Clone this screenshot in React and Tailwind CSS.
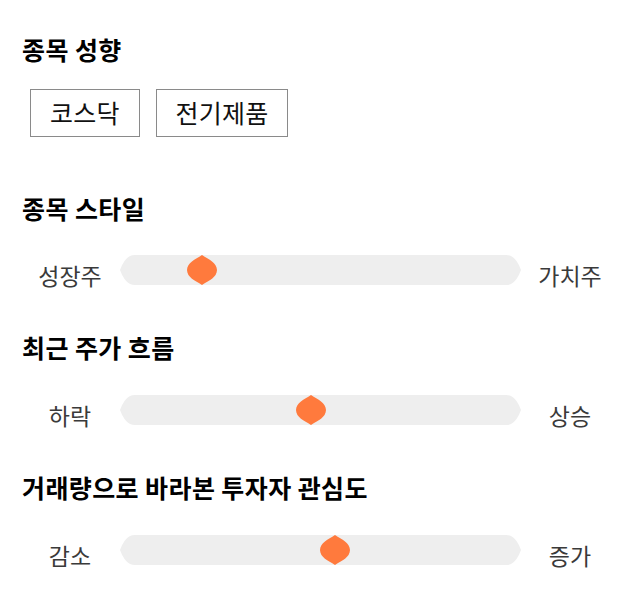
import React from "react";

const font = { fontFamily: '"Noto Sans CJK KR", "Noto Sans", sans-serif' };

function Thumb({ center }) {
  return (
    <svg
      className="absolute top-0"
      style={{ left: center - 15 }}
      width="30"
      height="30"
      viewBox="0 0 30 30"
    >
      <path
        d="M15 0 C22 4.5 29.8 7.5 30 15 C29.8 22.5 22 25.5 15 30 C8 25.5 0.2 22.5 0 15 C0.2 7.5 8 4.5 15 0 Z"
        fill="#ff7a3d"
      />
    </svg>
  );
}

function Slider({ left, right, center, className }) {
  return (
    <div className={"flex h-[30px] ml-[6px] " + className}>
      <div className="w-[84px] h-[30px] text-center text-[23px] leading-[40px] text-[#3a3a3a]">
        {left}
      </div>
      <div className="relative ml-[8px] w-[401px] h-[30px]">
        <svg width="401" height="30" viewBox="0 0 401 30" className="block">
          <path
            d="M0 15 Q4 4 10 1 Q12 0 15 0 H386 Q389 0 391 1 Q397 4 401 15 Q397 26 391 29 Q389 30 386 30 H15 Q12 30 10 29 Q4 26 0 15 Z"
            fill="#eeeeee"
          />
        </svg>
        <Thumb center={center} />
      </div>
      <div className="ml-[7px] w-[84px] h-[30px] text-center text-[23px] leading-[40px] text-[#3a3a3a]">
        {right}
      </div>
    </div>
  );
}

function Heading({ children, className }) {
  return (
    <h2
      className={
        "text-[25px] leading-[32px] font-bold text-black tracking-[0.4px] " +
        className
      }
    >
      {children}
    </h2>
  );
}

export default function App() {
  return (
    <div className="w-[640px] h-[606px] bg-white px-[22px] pt-[33px]" style={font}>
      <Heading>종목 성향</Heading>
      <div className="flex gap-[16px] mt-[24px] ml-[8px]">
        <div className="border border-[#8a8a8a] h-[48px] px-[19px] flex items-center text-[25px] text-[#111] tracking-[0.2px]">
          코스닥
        </div>
        <div className="border border-[#8a8a8a] h-[48px] px-[19px] flex items-center text-[25px] text-[#111] tracking-[0.2px]">
          전기제품
        </div>
      </div>
      <Heading className="mt-[55px]">종목 스타일</Heading>
      <Slider className="mt-[31px]" left="성장주" right="가치주" center={82} />
      <Heading className="mt-[46px]">최근 주가 흐름</Heading>
      <Slider className="mt-[32px]" left="하락" right="상승" center={191} />
      <Heading className="mt-[46px]">거래량으로 바라본 투자자 관심도</Heading>
      <Slider className="mt-[32px]" left="감소" right="증가" center={215} />
    </div>
  );
}
